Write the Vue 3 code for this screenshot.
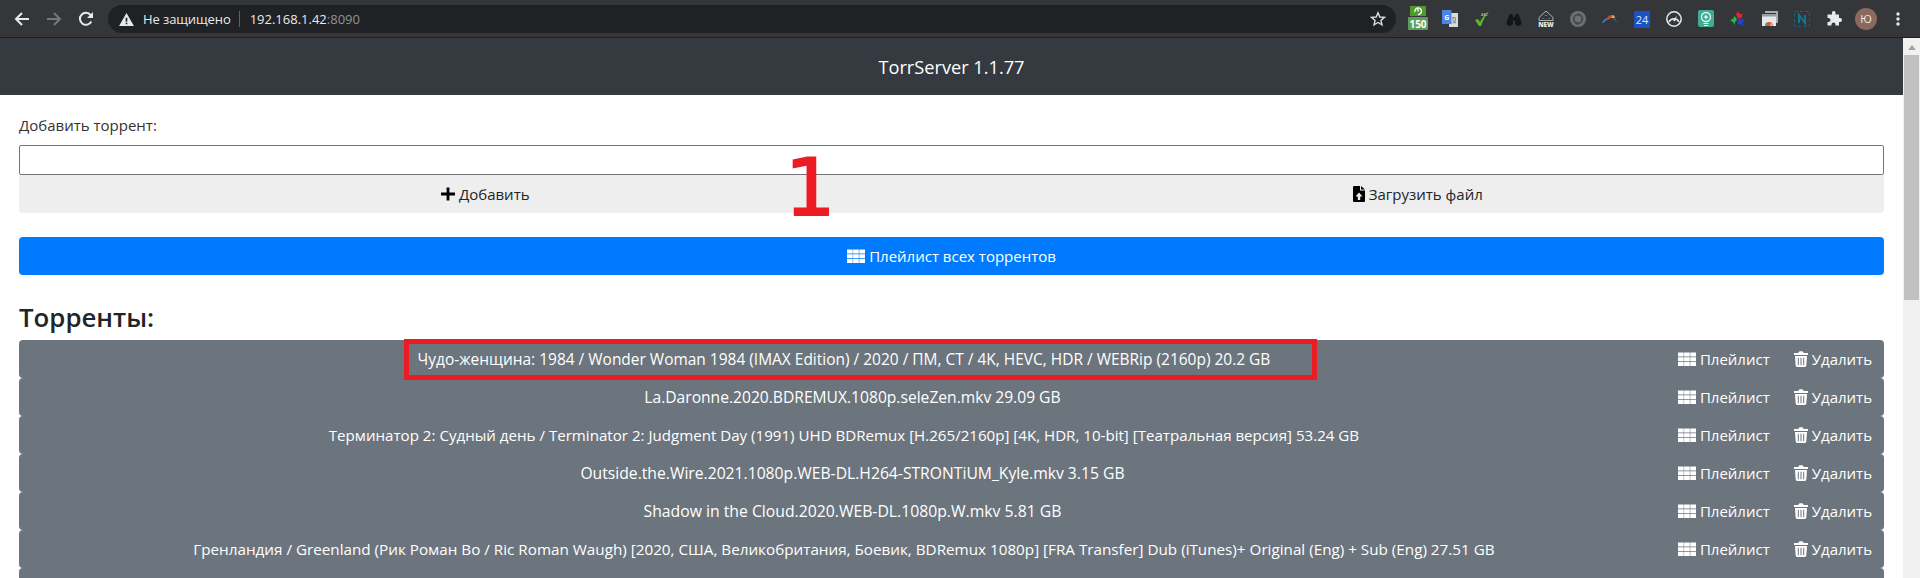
<script setup>
const exts = ['a150','gt','abc','bino','nw','sync','bow','n24','gauge','cam','stars','chr','nn','puz','av','dots']
const rows = [
  { text: 'Чудо-женщина: 1984 / Wonder Woman 1984 (IMAX Edition) / 2020 / ПМ, СТ / 4K, HEVC, HDR / WEBRip (2160p) 20.2 GB', size: 15.48, side: 'lean-left' },
  { text: 'La.Daronne.2020.BDREMUX.1080p.seleZen.mkv 29.09 GB', size: 15.62, side: 'lean-right' },
  { text: 'Терминатор 2: Судный день / Terminator 2: Judgment Day (1991) UHD BDRemux [H.265/2160p] [4K, HDR, 10-bit] [Театральная версия] 53.24 GB', size: 15.12, side: 'lean-left' },
  { text: 'Outside.the.Wire.2021.1080p.WEB-DL.H264-STRONTiUM_Kyle.mkv 3.15 GB', size: 15.69, side: 'lean-right' },
  { text: 'Shadow in the Cloud.2020.WEB-DL.1080p.W.mkv 5.81 GB', size: 15.76, side: 'lean-right' },
  { text: 'Гренландия / Greenland (Рик Роман Во / Ric Roman Waugh) [2020, США, Великобритания, Боевик, BDRemux 1080p] [FRA Transfer] Dub (iTunes)+ Original (Eng) + Sub (Eng) 27.51 GB', size: 15.24, side: 'lean-left' },
  { text: '', size: 15, side: '' }
]
</script>

<template>
  <div class="window">
    <svg width="0" height="0" class="defs">
      <symbol id="th" viewBox="0 0 18 16"><path d="M0 1.500h5.700v4H0zM6.100 1.500h5.700v4H6.100zM12.300 1.500H18v4h-5.700zM0 6.300h5.700v3.900H0zM6.100 6.300h5.700v3.900H6.100zM12.300 6.300H18v3.900h-5.700zM0 11h5.700v4H0zM6.100 11h5.700v4H6.100zM12.300 11H18v4h-5.700z" fill="currentColor"/></symbol>
      <symbol id="trash" viewBox="0 0 14 16"><path d="M0 2h4.300l.7-1.300c.1-.3.4-.5.8-.5h2.400c.4 0 .7.2.8.5L9.700 2H14v2H0zM1 5h12l-.7 9.600c-.1.800-.7 1.400-1.500 1.400H3.200c-.8 0-1.400-.6-1.500-1.400zm2.800 1.800v7.400h1V6.800zm2.700 0v7.400h1V6.800zm2.700 0v7.400h1V6.800z" fill="currentColor" fill-rule="evenodd"/></symbol>
    </svg>

    <header class="chrome">
      <div class="nav">
        <svg class="navicon" viewBox="0 0 16 16"><path d="M15 8H2.500M8 2 2 8l6 6" fill="none" stroke="#e8eaed" stroke-width="2"/></svg>
        <svg class="navicon" viewBox="0 0 16 16"><path d="M1 8h12.500M8 2l6 6-6 6" fill="none" stroke="#75777b" stroke-width="2"/></svg>
        <svg class="navicon" viewBox="0 0 16 16"><path d="M13.300 10.500A6 6 0 1 1 12.600 4" fill="none" stroke="#e8eaed" stroke-width="2"/><path d="M15 1v6H9z" fill="#e8eaed"/></svg>
      </div>
      <div class="omnibox">
        <svg class="warn" viewBox="0 0 16 14"><path fill-rule="evenodd" d="M8 0 16 14H0zM7.100 5v4.500h1.800V5zm0 5.500v1.700h1.800v-1.700z" fill="#e8eaed"/></svg>
        <span class="insecure">Не защищено</span>
        <span class="sep"></span>
        <span class="url">192.168.1.42<span class="port">:8090</span></span>
        <svg class="star" viewBox="0 0 16 16"><path d="M8 1.800 9.800 6l4.600.4-3.500 3 1.100 4.500L8 11.500l-4 2.400 1.100-4.500-3.500-3L6.200 6z" fill="none" stroke="#dadce0" stroke-width="1.400"/></svg>
      </div>
      <div class="exts">
        <div v-for="e in exts" :key="e" class="ext">
          <svg v-if="e === 'a150'" width="20" height="26" viewBox="0 0 20 26"><rect x="2" width="16" height="10" fill="#4f9a2c"/><path d="M7 6a3.300 3.300 0 1 1 3 2.500M10 3v2.500" fill="none" stroke="#fff" stroke-width="1.400"/><rect y="11" width="20" height="13" rx="1" fill="#5f9e5a"/><text x="10" y="21.500" class="t150">150</text></svg>
          <svg v-else-if="e === 'gt'" width="16" height="18" viewBox="0 0 16 18"><path d="M7 3h9v14H7z" fill="#d8dadd"/><path d="M0 0h9.500v14H0z" fill="#4a86e8"/><text x="4.700" y="10" class="tg">G</text><path d="M10 8h4M12 7v1M10.500 13c2 0 3-2 3-4M11 9.500c.5 2 1.500 3 3 3.500" stroke="#666" fill="none" stroke-width=".8"/></svg>
          <svg v-else-if="e === 'abc'" width="16" height="16" viewBox="0 0 16 16"><path d="M1 9l3-1 2 3c2-4 5-8 9-11-3 4-6 9-8 15H5z" fill="#5fb42d"/><text x="7" y="5" class="tabc">ABC</text></svg>
          <svg v-else-if="e === 'bino'" width="16" height="16" viewBox="0 0 16 16"><path d="M3.500 3h3l.6 3h1.800l.6-3h3l3 8.500A3.300 3.300 0 1 1 9.300 10H6.700a3.300 3.300 0 1 1-6.200 1.500z" fill="#14151a"/></svg>
          <svg v-else-if="e === 'nw'" width="16" height="18" viewBox="0 0 16 18"><path d="M1 7.500 8 1l7 6.500v3H1z" fill="none" stroke="#b0b2b6" stroke-width="1"/><path d="M3.500 8.500a2 2 0 0 1 3 0zM9.500 8.500a2 2 0 0 1 3 0z" fill="#2fa7d8"/><path d="M6.500 6a2 2 0 0 1 3 0z" fill="#e8a13a"/><text x="8" y="16.500" class="tnew">NEW</text></svg>
          <svg v-else-if="e === 'sync'" width="16" height="16" viewBox="0 0 16 16"><circle cx="8" cy="8" r="8" fill="#6f7073"/><circle cx="8" cy="8" r="4.300" fill="none" stroke="#47484b" stroke-width="1.800"/><path d="M8 1.500 11 4 8 5.500zM8 14.500 5 12l3-1.500z" fill="#47484b"/></svg>
          <svg v-else-if="e === 'bow'" width="16" height="10" viewBox="0 0 16 10"><path d="M0 9c1-3 3-4 5-5l1 2c-2 0-3 1-5 3z" fill="#2e8fb0"/><path d="M5 4c1-2 3-3 5-3l-1 3-3 2z" fill="#d8452e"/><path d="M10 1c2 0 3 1 3 3L9 4z" fill="#e8a13a"/><path d="M13 4l3 5c-2-2-4-3-6-4z" fill="#2b55a8"/></svg>
          <div v-else-if="e === 'n24'" class="n24">24</div>
          <svg v-else-if="e === 'gauge'" width="16" height="16" viewBox="0 0 16 16"><circle cx="8" cy="8" r="7.200" fill="#35363a" stroke="#e8eaed" stroke-width="1.500"/><path d="M3 11a5.500 5.500 0 0 1 10 0" fill="none" stroke="#e8eaed" stroke-width="1.500"/><path d="M7 9.500 11 4.500 9 10.500z" fill="#e8eaed"/></svg>
          <svg v-else-if="e === 'cam'" width="16" height="18" viewBox="0 0 16 18"><rect width="16" height="17" rx="2" fill="#43ab92"/><circle cx="8" cy="7" r="4.500" fill="none" stroke="#dff" stroke-width="1.300"/><circle cx="8" cy="7" r="1.700" fill="#dff"/><path d="M5.500 13.500h5M6 15.500h4" stroke="#dff"/></svg>
          <svg v-else-if="e === 'stars'" width="16" height="16" viewBox="0 0 16 16"><path d="M8 0l1.500 3 3-.5L11.500 7 8 7.500 6 4z" fill="#ea1d3a"/><path d="M0 9l3-1 1.500-3 2.500 3.500L5 11l-.5 3-1.500-3z" fill="#16c440"/><path d="M8 8.500l3.500-.5L15 9l-2.500 2 .5 4-3-1.500L7.500 13z" fill="#2a3fd0"/></svg>
          <svg v-else-if="e === 'chr'" width="16" height="16" viewBox="0 0 16 16"><path d="M3 2V0h13v12h-2V2z" fill="#a9abae"/><rect y="3" width="14" height="12" fill="#e8e8e8"/><rect y="3" width="14" height="2.500" fill="#9a9c9f"/><path d="M3 15a4 4 0 0 1 8 0z" fill="#e05240"/><path d="M9 11.500 11 15H8z" fill="#f2c230"/><path d="M3 15l2-3 1 3z" fill="#44a35a"/></svg>
          <svg v-else-if="e === 'nn'" width="16" height="16" viewBox="0 0 16 16"><rect x=".5" y=".5" width="15" height="15" fill="none" stroke="#12657a" stroke-dasharray="3 2.500"/><path d="M5 12V4l6 8V4" fill="none" stroke="#12768f" stroke-width="2"/></svg>
          <svg v-else-if="e === 'puz'" width="16" height="16" viewBox="0 0 16 16"><path d="M6 1.500a1.800 1.800 0 0 1 3.500 0V3.500H13V7h1a2 2 0 0 1 0 4h-1v3.500H9.500v-1a2 2 0 0 0-4 0v1H1.500V11h1a2 2 0 0 0 0-4h-1V3.500H6z" fill="#e8eaed"/></svg>
          <div v-else-if="e === 'av'" class="avatar">Ю</div>
          <svg v-else width="4" height="14" viewBox="0 0 4 14"><circle cx="2" cy="2" r="1.700" fill="#e8eaed"/><circle cx="2" cy="7" r="1.700" fill="#e8eaed"/><circle cx="2" cy="12" r="1.700" fill="#e8eaed"/></svg>
        </div>
      </div>
    </header>

    <div class="viewport">
      <main class="page">
        <div class="appbar">TorrServer 1.1.77</div>
        <section class="content">
          <label class="lbl">Добавить торрент:</label>
          <input class="input" type="text" />
          <div class="btn-row">
            <div class="light-btn">
              <svg class="ico" width="14" height="16" viewBox="0 0 14 16"><path d="M5.600 1.500h2.800v5.100H14v2.800H8.400v5.100H5.600V9.400H0V6.600h5.600z" fill="#000"/></svg>
              Добавить
            </div>
            <div class="light-btn">
              <svg class="ico" width="12" height="16" viewBox="0 0 12 16"><path fill-rule="evenodd" d="M0 1a1 1 0 0 1 1-1h6v4.500h5V15a1 1 0 0 1-1 1H1a1 1 0 0 1-1-1zM6 6.500 2.500 10.500h2.300V14h2.400v-3.500h2.300zM8 0l4 3.500H8z" fill="#000"/></svg>
              Загрузить файл
            </div>
          </div>
          <div class="primary"><svg class="ico" width="18" height="16"><use href="#th"/></svg> Плейлист всех торрентов</div>
          <h2 class="title">Торренты:</h2>
          <div class="list">
            <div v-for="(r, i) in rows" :key="i" class="row">
              <div class="name" :class="r.side" :style="{ fontSize: r.size + 'px' }">{{ r.text }}</div>
              <div class="actions" v-if="r.text">
                <span class="act"><svg class="ico" width="18" height="16"><use href="#th"/></svg> Плейлист</span>
                <span class="act"><svg class="ico" width="14" height="16"><use href="#trash"/></svg> Удалить</span>
              </div>
            </div>
          </div>
        </section>
        <div class="mark-one">1</div>
        <div class="mark-box"></div>
      </main>
      <aside class="scrollbar">
        <span class="arrow"></span>
        <span class="thumb"></span>
      </aside>
    </div>
  </div>
</template>

<style>
html, body { margin: 0; overflow: hidden; height: 578px; background: #fff; }
</style>

<style scoped>
.window { width: 1920px; height: 578px; display: flex; flex-direction: column; overflow: hidden; font-family: "Open Sans", "Noto Sans", sans-serif; }
.defs { position: absolute; }
.chrome { background: #35363a; border-bottom: 1px solid #1f2023; display: flex; align-items: center; flex: none; padding-top: 1px; box-sizing: content-box; height: 36px; }
.nav { display: flex; gap: 16px; padding-left: 14px; width: 108px; box-sizing: border-box; flex: none; }
.navicon { width: 16px; height: 16px; }
.omnibox { width: 1288px; height: 28px; border-radius: 14px; background: #202124; display: flex; align-items: center; flex: none; padding: 0 10px; box-sizing: border-box; color: #e8eaed; font-size: 13px; }
.warn { width: 15px; height: 13px; margin-left: 1px; margin-right: 9px; }
.insecure { letter-spacing: -.1px; }
.sep { width: 1px; height: 16px; background: #5f6368; margin: 0 10px 0 8px; }
.port { color: #8f9296; }
.star { width: 16px; height: 16px; margin-left: auto; }
.exts { display: flex; padding-left: 6px; }
.ext { width: 32px; height: 36px; display: flex; align-items: center; justify-content: center; }
.t150 { font: 700 10px "Open Sans", sans-serif; fill: #fff; text-anchor: middle; }
.tg { font: 700 7px "Open Sans", sans-serif; fill: #fff; text-anchor: middle; }
.tabc { font: 700 3.5px "Open Sans", sans-serif; fill: #aaa; }
.tnew { font: 800 6.5px "Open Sans", sans-serif; fill: #e8e8e8; text-anchor: middle; }
.n24 { width: 16px; height: 17px; background: #1b51c0; color: #dce6ff; font-size: 11px; line-height: 17px; text-align: center; }
.avatar { width: 22px; height: 22px; border-radius: 50%; background: #8a6a5e; color: #f0e8e4; font-size: 11px; line-height: 22px; text-align: center; }

.viewport { flex: 1; display: flex; min-height: 0; position: relative; }
.page { width: 1903px; position: relative; overflow: hidden; background: #fff; }
.appbar { height: 57px; background: #343a40; color: #fff; font-size: 18.2px; display: flex; align-items: center; justify-content: center; }
.content { padding: 0 19px; color: #212529; font-size: 15px; }
.lbl { display: block; padding-top: 19px; height: 31px; line-height: 22px; box-sizing: content-box; color: #333; font-size: 15px; }
.input { display: block; width: 100%; height: 30px; box-sizing: border-box; border: 1px solid #767676; border-radius: 2px; background: #fff; margin: 0; padding: 0; outline: none; }
.btn-row { display: flex; height: 38px; background: #eee; border-radius: 0 0 4px 4px; }
.light-btn { flex: 1; display: flex; align-items: center; justify-content: center; gap: 4px; color: #212529; }
.ico { flex: none; color: inherit; }
.primary { margin-top: 24px; height: 38px; border-radius: 4px; background: #007bff; color: #fff; display: flex; align-items: center; justify-content: center; gap: 4px; }
.title { font-size: 25.8px; font-weight: 600; margin: 22px 0 0; height: 43px; line-height: 40px; color: #212529; }
.list { display: flex; flex-direction: column; }
.row { height: 38px; border-radius: 4px; background: #6c757d; color: #fff; display: flex; align-items: center; flex: none; }
.name { flex: 1; text-align: center; white-space: nowrap; }
.lean-left { padding-right: 9px; }
.lean-right { padding-left: 8px; }
.actions { display: flex; gap: 24px; padding-right: 12px; justify-content: flex-end; flex: none; }
.act { display: flex; align-items: center; gap: 4px; white-space: nowrap; flex: none; }
.mark-one { position: absolute; left: 785px; top: 90px; color: #ed1c24; font: 400 79px "DejaVu Sans", sans-serif; line-height: 120px; -webkit-text-stroke: 2px #ed1c24; }
.mark-box { position: absolute; left: 404px; top: 301px; width: 913px; height: 41px; box-sizing: border-box; border: 5px solid #ed1c24; }
.scrollbar { width: 17px; background: #f1f1f1; position: relative; display: flex; flex-direction: column; align-items: center; }
.arrow { margin-top: 7px; width: 0; height: 0; border-left: 4px solid transparent; border-right: 4px solid transparent; border-bottom: 5px solid #a3a3a3; }
.thumb { margin-top: 5px; width: 15px; height: 245px; background: #c1c1c1; }
</style>
